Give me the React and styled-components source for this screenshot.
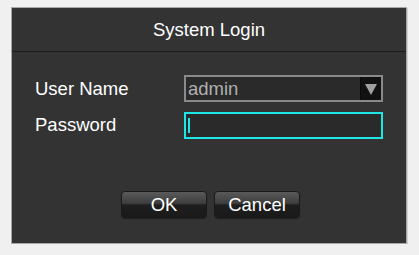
import styled, { createGlobalStyle } from 'styled-components';

const GlobalStyle = createGlobalStyle`
  html, body {
    margin: 0;
    padding: 0;
    background: #f0f0f0;
    font-family: "Liberation Sans", Arial, sans-serif;
  }
`;

const Page = styled.div`
  padding: 7px 0 0 11px;
`;

const Dialog = styled.div`
  width: 394px;
  height: 235px;
  background: #333333;
  border: 1px solid #a8a8a8;
  box-shadow: 1px 1px 0 #d0d0d0;
  display: flex;
  flex-direction: column;
`;

const Title = styled.div`
  height: 44px;
  border-bottom: 1px solid #1c1c1c;
  color: #ffffff;
  font-size: 18.5px;
  display: flex;
  align-items: center;
  justify-content: center;
  padding-top: 1px;
  box-sizing: border-box;
`;

const Form = styled.div`
  display: grid;
  grid-template-columns: 149px 199px;
  row-gap: 10px;
  padding: 23px 0 0 23px;
  align-items: center;
`;

const Label = styled.div`
  color: #ffffff;
  font-size: 18.5px;
  margin-top: ${p => p.$shift || 0}px;
`;

const Field = styled.div`
  height: 27px;
  box-sizing: border-box;
  border: 2px solid ${p => (p.$focused ? '#1ee6e6' : '#8a8a8a')};
  background: #2a2a2a;
  display: flex;
  align-items: center;
`;

const Value = styled.span`
  color: #b0b0b0;
  font-size: 18.5px;
  padding-left: 2px;
  flex: 1;
`;

const DropButton = styled.div`
  width: 20px;
  height: 23px;
  background: #111111;
  border-left: 1px solid #0a0a0a;
  display: flex;
  align-items: center;
  justify-content: center;
`;

const Caret = styled.div`
  width: 2px;
  height: 15px;
  background: #1ee6e6;
  margin-left: 2px;
`;

const Buttons = styled.div`
  display: flex;
  justify-content: center;
  gap: 7px;
  margin-top: 52px;
  padding-left: 3px;
`;

const Button = styled.button`
  width: ${p => p.$w}px;
  height: 27px;
  border: 1px solid #1a1a1a;
  border-radius: 4px;
  background: linear-gradient(to bottom, #5a5a5a 0%, #3e3e3e 45%, #1e1e1e 52%, #1a1a1a 100%);
  color: #ffffff;
  font-family: "Liberation Sans", Arial, sans-serif;
  font-size: 18.5px;
  padding: 0;
  box-shadow: 0 1px 1px rgba(0, 0, 0, 0.4);
`;

export default function App() {
  return (
    <>
      <GlobalStyle />
      <Page>
        <Dialog>
          <Title>System Login</Title>
          <Form>
            <Label>User Name</Label>
            <Field>
              <Value>admin</Value>
              <DropButton>
                <svg width="12" height="12" viewBox="0 0 12 12">
                  <polygon points="0,1 12,1 6,12" fill="#a0a0a0" />
                </svg>
              </DropButton>
            </Field>
            <Label $shift={-2}>Password</Label>
            <Field $focused>
              <Caret />
            </Field>
          </Form>
          <Buttons>
            <Button $w={86}>OK</Button>
            <Button $w={86}>Cancel</Button>
          </Buttons>
        </Dialog>
      </Page>
    </>
  );
}
